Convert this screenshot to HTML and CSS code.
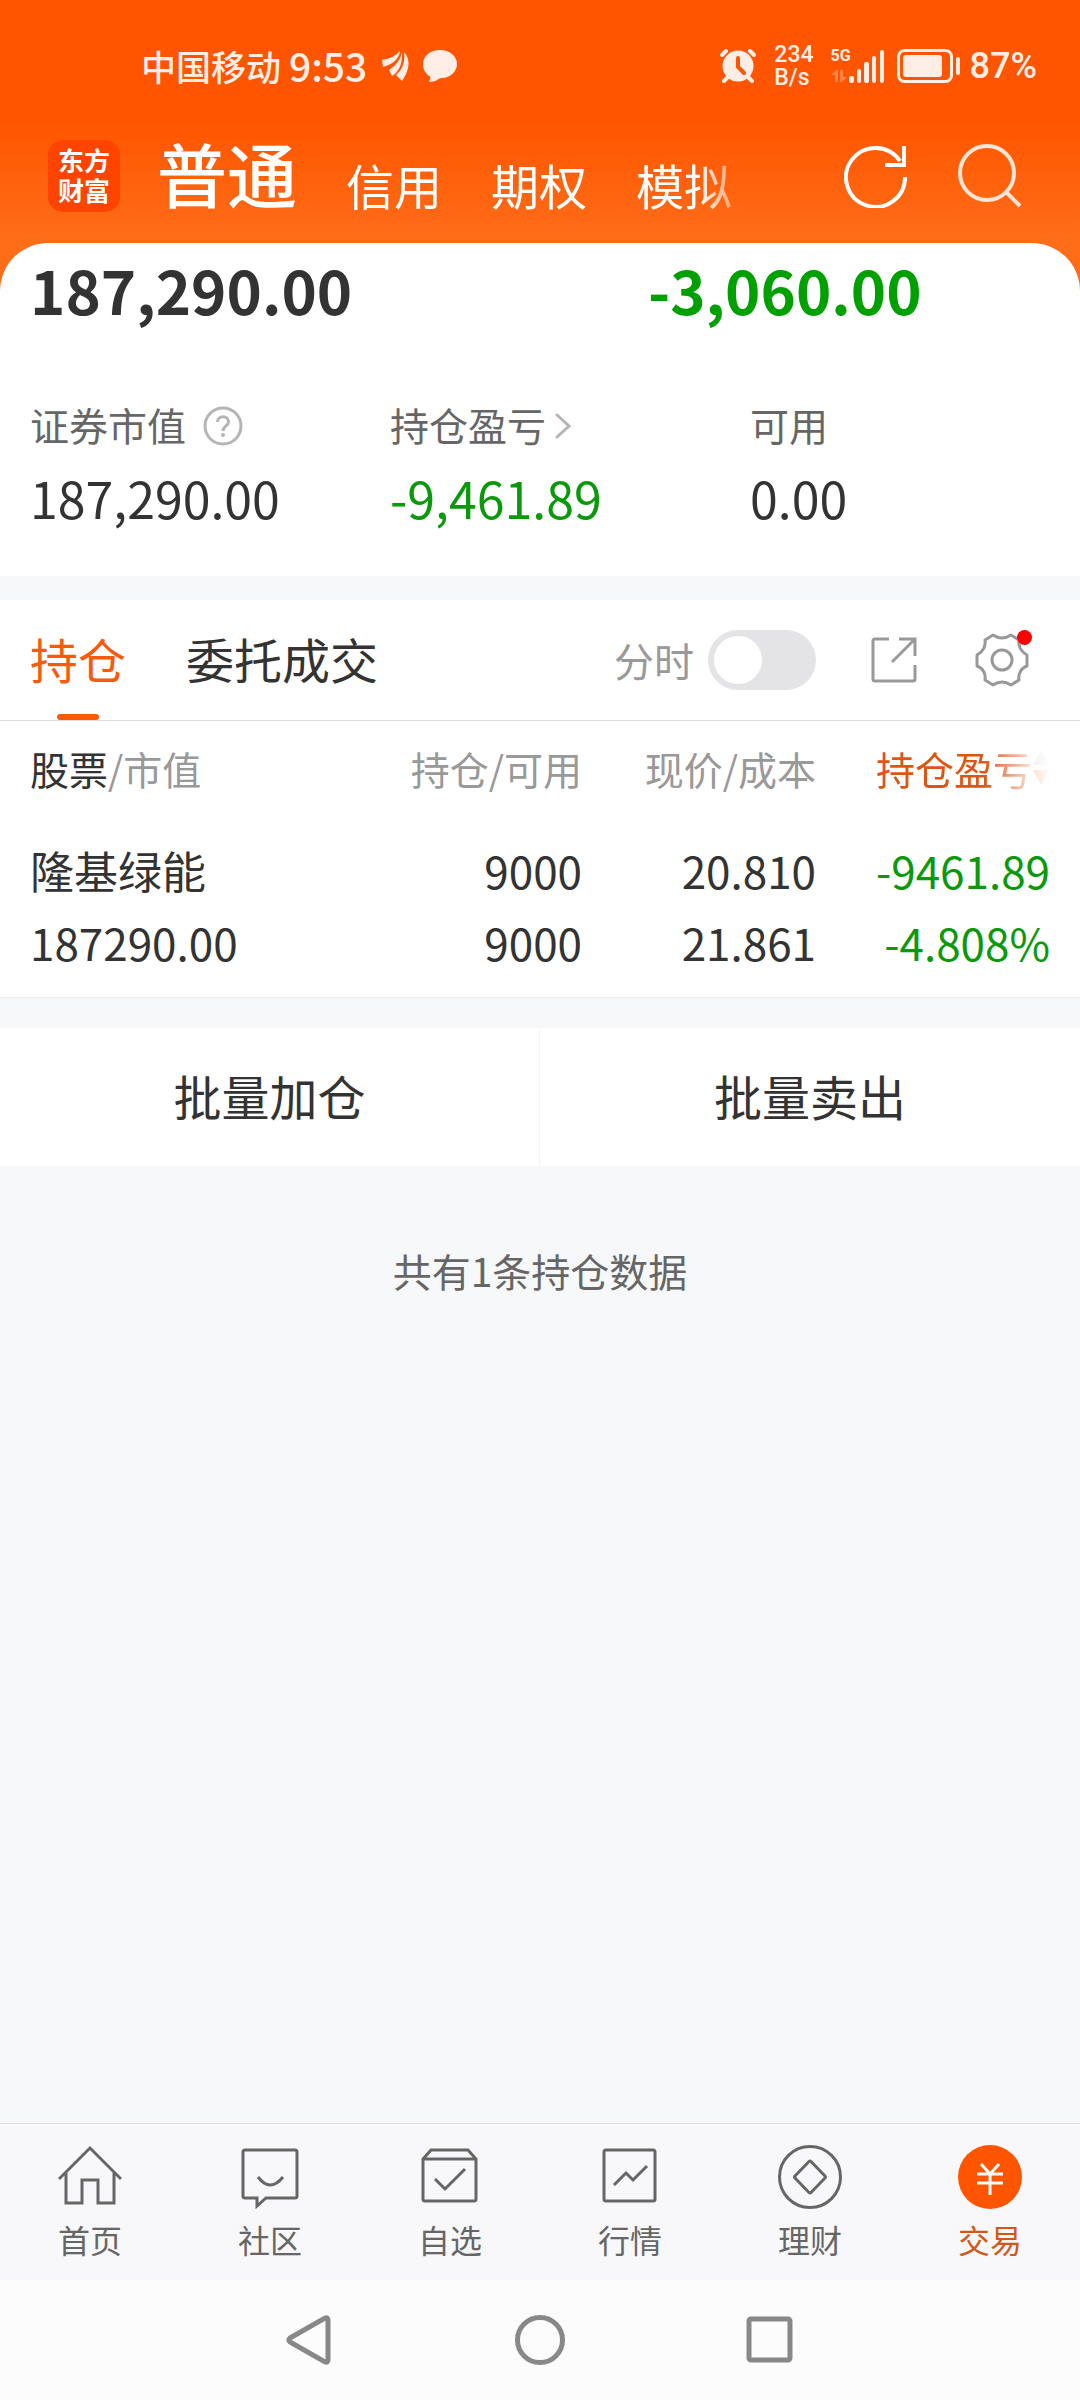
FILE: index.html
```html
<!DOCTYPE html>
<html lang="zh-CN">
<head>
<meta charset="utf-8">
<meta name="viewport" content="width=device-width, initial-scale=1">
<title>东方财富 交易</title>
<link rel="stylesheet" href="styles.css">
</head>
<body>
<div class="app">
  <header class="header">
    <div class="status">
      <span class="carrier">中国移动</span>
      <span class="clock">9:53</span>
      <svg class="status-swoosh" width="28" height="32" viewBox="0 0 28 32" fill="currentColor"><path d="M0 10Q12 8 18 1Q17 12 1 17z"/><path d="M20 2Q21 19 10 26L7 20Q18 13 20 2z"/><path d="M22 2Q32 13 20 31L14 25Q24 17 22 2z"/></svg>
      <svg class="status-bubble" width="34" height="32" viewBox="0 0 34 32" fill="currentColor"><path d="M17 0c9.500 0 17 6 17 14s-7.500 14-15 14c-3 0-3 1-5 2-2 1.500-5 2-8 1.500 1-1.500 2-3 1-5C3 24 0 20 0 14 0 6 7.500 0 17 0z"/></svg>
      <svg class="status-alarm" width="36" height="34" viewBox="0 0 36 34"><g fill="none" stroke="currentColor" stroke-width="4" stroke-linecap="round"><path d="M2 6l4-4M34 6l-4-4M8 28l-4 4M28 28l4 4"/></g><circle cx="18" cy="17" r="15.500" fill="currentColor"/><path d="M18 9v9l6 6" fill="none" stroke="#ff5500" stroke-width="4" stroke-linecap="round"/></svg>
      <span class="netspeed"><span>234</span><span>B/s</span></span>
      <span class="signal"><span class="signal-gen">5G</span>
        <svg width="54" height="34" viewBox="0 0 54 34" fill="currentColor"><g opacity=".3"><path d="M0 26l5-5h2v12H4v-7zM9 21h3v7h4l-5 5H9z"/></g><rect x="18" y="27" width="5" height="7" rx="2"/><rect x="26" y="20" width="4" height="14" rx="2"/><rect x="33" y="13" width="5" height="21" rx="2"/><rect x="41" y="7" width="4" height="27" rx="2"/><rect x="49" y="1" width="4" height="33" rx="2"/></svg>
      </span>
      <svg class="status-battery" width="64" height="34" viewBox="0 0 64 34"><rect x="1.500" y="1.500" width="53" height="31" rx="6" fill="none" stroke="currentColor" stroke-width="3"/><rect x="6" y="6" width="39" height="22" rx="3" fill="currentColor"/><rect x="59" y="8" width="4" height="18" rx="2" fill="currentColor"/></svg>
      <span class="percent">87%</span>
    </div>
    <div class="topbar">
      <a class="logo" href="#">东方<br>财富</a>
      <nav class="accounts">
        <a class="account account-active" href="#">普通</a>
        <a class="account" href="#">信用</a>
        <a class="account" href="#">期权</a>
        <a class="account" href="#">模拟</a>
      </nav>
      <button class="icon-button" type="button" aria-label="刷新"><svg width="64" height="64" viewBox="0 0 64 64" fill="none" stroke="#fff" stroke-width="4"><path d="M61 33A29.500 29.500 0 1 1 56 17"/><path d="M60 2v19H41"/></svg></button>
      <button class="icon-button search" type="button" aria-label="搜索"><svg width="64" height="64" viewBox="0 0 64 64" fill="none" stroke="currentColor" stroke-width="4"><circle cx="29" cy="29" r="27"/><path d="M48 48l14 14"/></svg></button>
    </div>
  </header>

  <main class="main">
    <section class="summary">
      <div class="totals"><strong class="total">187,290.00</strong><strong class="total down">-3,060.00</strong></div>
      <dl class="stats">
        <div class="stat"><dt>证券市值<button class="hint" type="button" aria-label="说明"><svg width="40" height="40" viewBox="0 0 40 40" fill="none" stroke="#b5b5b5" stroke-width="3"><circle cx="20" cy="20" r="18"/><path d="M14.500 16c0-7 11-7 11 0 0 4-5.500 4-5.500 9"/><circle cx="20" cy="29" r="1" fill="#b5b5b5" stroke-width="2"/></svg></button></dt><dd>187,290.00</dd></div>
        <div class="stat"><dt>持仓盈亏<svg class="chevron" width="16" height="26" viewBox="0 0 16 26" fill="none" stroke="#b5b5b5" stroke-width="3" stroke-linecap="round"><path d="M2 2l12 11L2 24"/></svg></dt><dd class="down">-9,461.89</dd></div>
        <div class="stat"><dt>可用</dt><dd>0.00</dd></div>
      </dl>
    </section>

    <section class="positions">
      <div class="tabs">
        <button class="tab tab-active" type="button">持仓</button>
        <button class="tab" type="button">委托成交</button>
        <label class="switch-label" for="minute">分时</label>
        <input class="switch" id="minute" type="checkbox" role="switch">
        <button class="icon-button share" type="button" aria-label="分享"><svg width="46" height="46" viewBox="0 0 46 46" fill="none" stroke="#999" stroke-width="3"><path d="M18 2H4a2 2 0 0 0-2 2v38a2 2 0 0 0 2 2h38a2 2 0 0 0 2-2V28"/><path d="M28 2h16v17M44 2L21 25"/></svg></button>
        <button class="icon-button settings" type="button" aria-label="设置"><svg width="54" height="54" viewBox="0 0 54 54" fill="none" stroke="#999" stroke-width="3" stroke-linejoin="round"><path d="M18 2Q27 8 36 2L44 7C43 13 46 19 52 22V33C46 35 43 41 44 47L36 52Q27 46 18 52L10 47C11 41 8 35 2 33V22C8 19 11 13 10 7z"/><circle cx="27" cy="27" r="10"/></svg><span class="dot"></span></button>
      </div>
      <table class="table">
        <colgroup><col><col class="col-amount"><col class="col-price"><col class="col-profit"></colgroup>
        <thead><tr><th><b>股票</b>/市值</th><th>持仓/可用</th><th>现价/成本</th><th class="sorted"><span class="fade">持仓盈亏<svg width="18" height="36" viewBox="0 0 18 36"><path d="M9 0l8 15H1z" fill="#bbb"/><path d="M1 20h16L9 35z" fill="#ff5500"/></svg></span></th></tr></thead>
        <tbody><tr><td>隆基绿能<br>187290.00</td><td>9000<br>9000</td><td>20.810<br>21.861</td><td class="down">-9461.89<br>-4.808%</td></tr></tbody>
      </table>
    </section>

    <div class="batch"><button type="button">批量加仓</button><button type="button">批量卖出</button></div>
    <p class="count">共有1条持仓数据</p>
  </main>

  <nav class="tabbar">
    <a href="#"><svg width="64" height="64" viewBox="0 0 64 64"><path d="M1 34L32 3l31 31M8 28v30h16V35h16v23h16V28"/></svg>首页</a>
    <a href="#"><svg width="64" height="64" viewBox="0 0 64 64"><path d="M7 5h50a2 2 0 0 1 2 2v44a2 2 0 0 1-2 2H28l-9 8v-8H7a2 2 0 0 1-2-2V7a2 2 0 0 1 2-2z"/><path d="M20 32q12 16 25 0"/></svg>社区</a>
    <a href="#"><svg width="64" height="64" viewBox="0 0 64 64"><path d="M5 14l8-9h37l8 9v40a2 2 0 0 1-2 2H7a2 2 0 0 1-2-2zM5 14h53M17 34l10 10 20-20"/></svg>自选</a>
    <a href="#"><svg width="64" height="64" viewBox="0 0 64 64"><rect x="6" y="5" width="51" height="51" rx="2"/><path d="M16 40l12-12 7 7 14-14"/></svg>行情</a>
    <a href="#"><svg width="64" height="64" viewBox="0 0 64 64"><circle cx="32" cy="32" r="30.500"/><path d="M31 16.500q1-1 2 0l14 14.500q1 1 0 2L33 47.500q-1 1-2 0L17 33q-1-1 0-2z"/></svg>理财</a>
    <a class="tabbar-active" href="#"><svg width="64" height="64" viewBox="0 0 64 64"><circle class="coin" cx="32" cy="32" r="32"/><path class="yen" d="M23 19l9 10 9-10M19 29h26M19 38h26M32 29v21"/></svg>交易</a>
  </nav>

  <div class="sysnav">
    <button type="button" aria-label="返回"><svg width="50" height="50" viewBox="0 0 50 50"><path d="M5 23L40 3q3-1 3 2v40q0 3-3 2L5 27q-2-2 0-4z"/></svg></button>
    <button type="button" aria-label="主屏幕"><svg width="50" height="50" viewBox="0 0 50 50"><circle cx="25" cy="25" r="22.500"/></svg></button>
    <button type="button" aria-label="最近任务"><svg width="50" height="50" viewBox="0 0 50 50"><rect x="4" y="4" width="41" height="41" rx="2"/></svg></button>
  </div>
</div>
</body>
</html>
```

FILE: styles.css
```css
* {
  box-sizing: border-box;
}

body {
  margin: 0;
  background: #f7f8fa;
  color: #333;
  font-family: "Noto Sans CJK SC", sans-serif;
}

button {
  padding: 0;
  border: 0;
  background: none;
  color: inherit;
  font: inherit;
}

a {
  color: inherit;
  text-decoration: none;
}

svg {
  display: block;
  flex: none;
}

.app {
  display: flex;
  flex-direction: column;
  min-height: 100vh;
}

/* Header */
.header {
  padding-bottom: 80px;
  background: linear-gradient(#ff5500 120px, #ff6d18 240px);
  color: #fff;
}

.status {
  display: flex;
  align-items: center;
  height: 132px;
  padding: 0 43px 0 141px;
  color: #ffeee5;
}

.carrier {
  padding-bottom: 2px;
  font-size: 35px;
  font-weight: 500;
}

.clock {
  margin-left: 8px;
  padding-bottom: 2px;
  font-size: 39px;
  font-weight: 500;
}

.status-swoosh {
  margin-left: 15px;
}

.status-bubble {
  margin-left: 13px;
}

.status-alarm {
  margin-left: auto;
}

.netspeed {
  display: flex;
  flex-direction: column;
  margin-left: 18px;
  font: 500 23px/23px Roboto, sans-serif;
}

.signal {
  position: relative;
  margin-left: 17px;
}

.signal-gen {
  position: absolute;
  top: -3px;
  left: 0;
  font: 700 16px/20px Roboto, sans-serif;
}

.status-battery {
  margin-left: 12px;
}

.percent {
  margin-left: 9px;
  font: 500 36px/44px Roboto, sans-serif;
}

.topbar {
  display: flex;
  align-items: center;
  height: 88px;
  padding: 0 58px 0 48px;
}

.logo {
  width: 72px;
  height: 72px;
  padding-top: 5px;
  border-radius: 15px;
  background: #ff4400;
  font-size: 26px;
  font-weight: 700;
  line-height: 30px;
  text-align: center;
}

.accounts {
  display: flex;
  flex: 1;
  align-items: flex-end;
  gap: 49px;
  margin-left: 37px;
  padding-bottom: 6px;
  white-space: nowrap;
  -webkit-mask-image: linear-gradient(90deg, #000 540px, transparent 600px);
  mask-image: linear-gradient(90deg, #000 540px, transparent 600px);
}

.account {
  font-size: 48px;
  line-height: 82px;
}

.account-active {
  font-size: 70px;
  font-weight: 500;
  line-height: 104px;
}

.icon-button {
  flex: none;
}

.search {
  margin-left: 50px;
  color: #ffe5d6;
}

/* Account summary */
.main {
  flex: 1;
  margin-top: -57px;
}

.summary {
  padding: 14px 0 49px;
  border-radius: 48px 48px 0 0;
  background: #fff;
}

.totals {
  display: flex;
}

.total {
  width: 40%;
  font-size: 60px;
  line-height: 64px;
}

.total:first-child {
  width: 60%;
  padding-left: 30px;
}

.down {
  color: #0a990a;
}

.total.down {
  color: #00a000;
}

.stats {
  display: grid;
  grid-template-columns: repeat(3, 1fr);
  margin: 77px 0 0;
}

.stat {
  padding-left: 30px;
}

.stat dt {
  display: flex;
  align-items: center;
  color: #666;
  font-size: 39px;
  line-height: 52px;
}

.stat dt svg {
  margin-top: 4px;
}

.stat dd {
  margin: 17px 0 0;
  font-size: 50px;
  line-height: 60px;
}

.hint {
  margin-left: 17px;
}

.chevron {
  margin-left: 9px;
}

/* Positions */
.positions {
  margin-top: 24px;
  border-bottom: 1px solid #ebedef;
  background: #fff;
}

.tabs {
  display: flex;
  align-items: center;
  height: 121px;
  padding: 0 51px 0 30px;
  border-bottom: 1px solid #ddd;
}

.tab {
  position: relative;
  height: 120px;
  padding-bottom: 4px;
  font-size: 48px;
}

.tab + .tab {
  margin-left: 60px;
}

.tab-active {
  color: #f85a0c;
}

.tab-active::after {
  position: absolute;
  bottom: 0;
  left: calc(50% - 21px);
  width: 42px;
  height: 6px;
  border-radius: 3px;
  background: #f85a0c;
  content: "";
}

.switch-label {
  margin-left: auto;
  color: #999;
  font-size: 40px;
  line-height: 60px;
}

.switch {
  width: 108px;
  height: 60px;
  margin: 0 0 0 14px;
  padding: 6px;
  border-radius: 30px;
  background: #e4e4e6;
  appearance: none;
}

.switch::before {
  display: block;
  width: 48px;
  height: 48px;
  border-radius: 50%;
  background: #fff;
  content: "";
}

.switch:checked {
  background: #ff5500;
}

.switch:checked::before {
  margin-left: auto;
}

.share {
  margin-left: 55px;
}

.settings {
  position: relative;
  margin-left: 58px;
}

.dot {
  position: absolute;
  top: -3px;
  right: -3px;
  width: 15px;
  height: 15px;
  border-radius: 50%;
  background: #f00;
}

.table {
  width: 100%;
  border-collapse: collapse;
  table-layout: fixed;
  text-align: right;
}

.col-amount {
  width: 260px;
}

.col-price {
  width: 234px;
}

.col-profit {
  width: 264px;
}

.table th {
  height: 94px;
  padding: 0;
  color: #999;
  font-size: 39px;
  font-weight: 400;
  line-height: 52px;
  white-space: nowrap;
}

.table th b {
  color: #333;
  font-weight: 400;
}

.table td {
  padding: 19px 0;
  font-size: 44px;
  line-height: 72px;
}

.table tr > :first-child {
  padding-left: 30px;
  text-align: left;
}

.table tr > :last-child {
  padding-right: 30px;
}

.table .sorted {
  color: #dd5512;
}

.fade {
  display: flex;
  align-items: center;
  justify-content: flex-end;
  -webkit-mask-image: linear-gradient(270deg, rgba(0, 0, 0, .02), rgba(0, 0, 0, .2) 20px, #000 66px);
  mask-image: linear-gradient(270deg, rgba(0, 0, 0, .02), rgba(0, 0, 0, .2) 20px, #000 66px);
}

/* Batch actions */
.batch {
  display: grid;
  grid-template-columns: 1fr 1fr;
  margin-top: 30px;
  background: #fff;
}

.batch button {
  height: 138px;
  padding-bottom: 4px;
  font-size: 48px;
}

.batch button:first-child {
  border-right: 1px solid #f5f5f5;
}

.count {
  margin: 78px 0;
  color: #666;
  font-size: 39px;
  line-height: 52px;
  text-align: center;
}

/* Bottom tabs */
.tabbar {
  display: grid;
  grid-template-columns: repeat(6, 1fr);
  height: 157px;
  padding-top: 21px;
  border-top: 1px solid #ddd;
  background: #f8f8fa;
}

.tabbar a {
  display: flex;
  flex-direction: column;
  align-items: center;
  gap: 10px;
  color: #666;
  font-size: 32px;
  line-height: 40px;
}

.tabbar svg {
  fill: none;
  stroke: #666;
  stroke-width: 3;
}

.tabbar .tabbar-active {
  color: #d4571a;
}

.tabbar .coin {
  fill: #ff5500;
  stroke: none;
}

.tabbar .yen {
  stroke: #fff;
}

/* System navigation */
.sysnav {
  display: flex;
  align-items: center;
  justify-content: center;
  gap: 180px;
  height: 120px;
  background: #fcfcfc;
}

.sysnav svg {
  fill: none;
  stroke: #888;
  stroke-width: 5;
}
```
